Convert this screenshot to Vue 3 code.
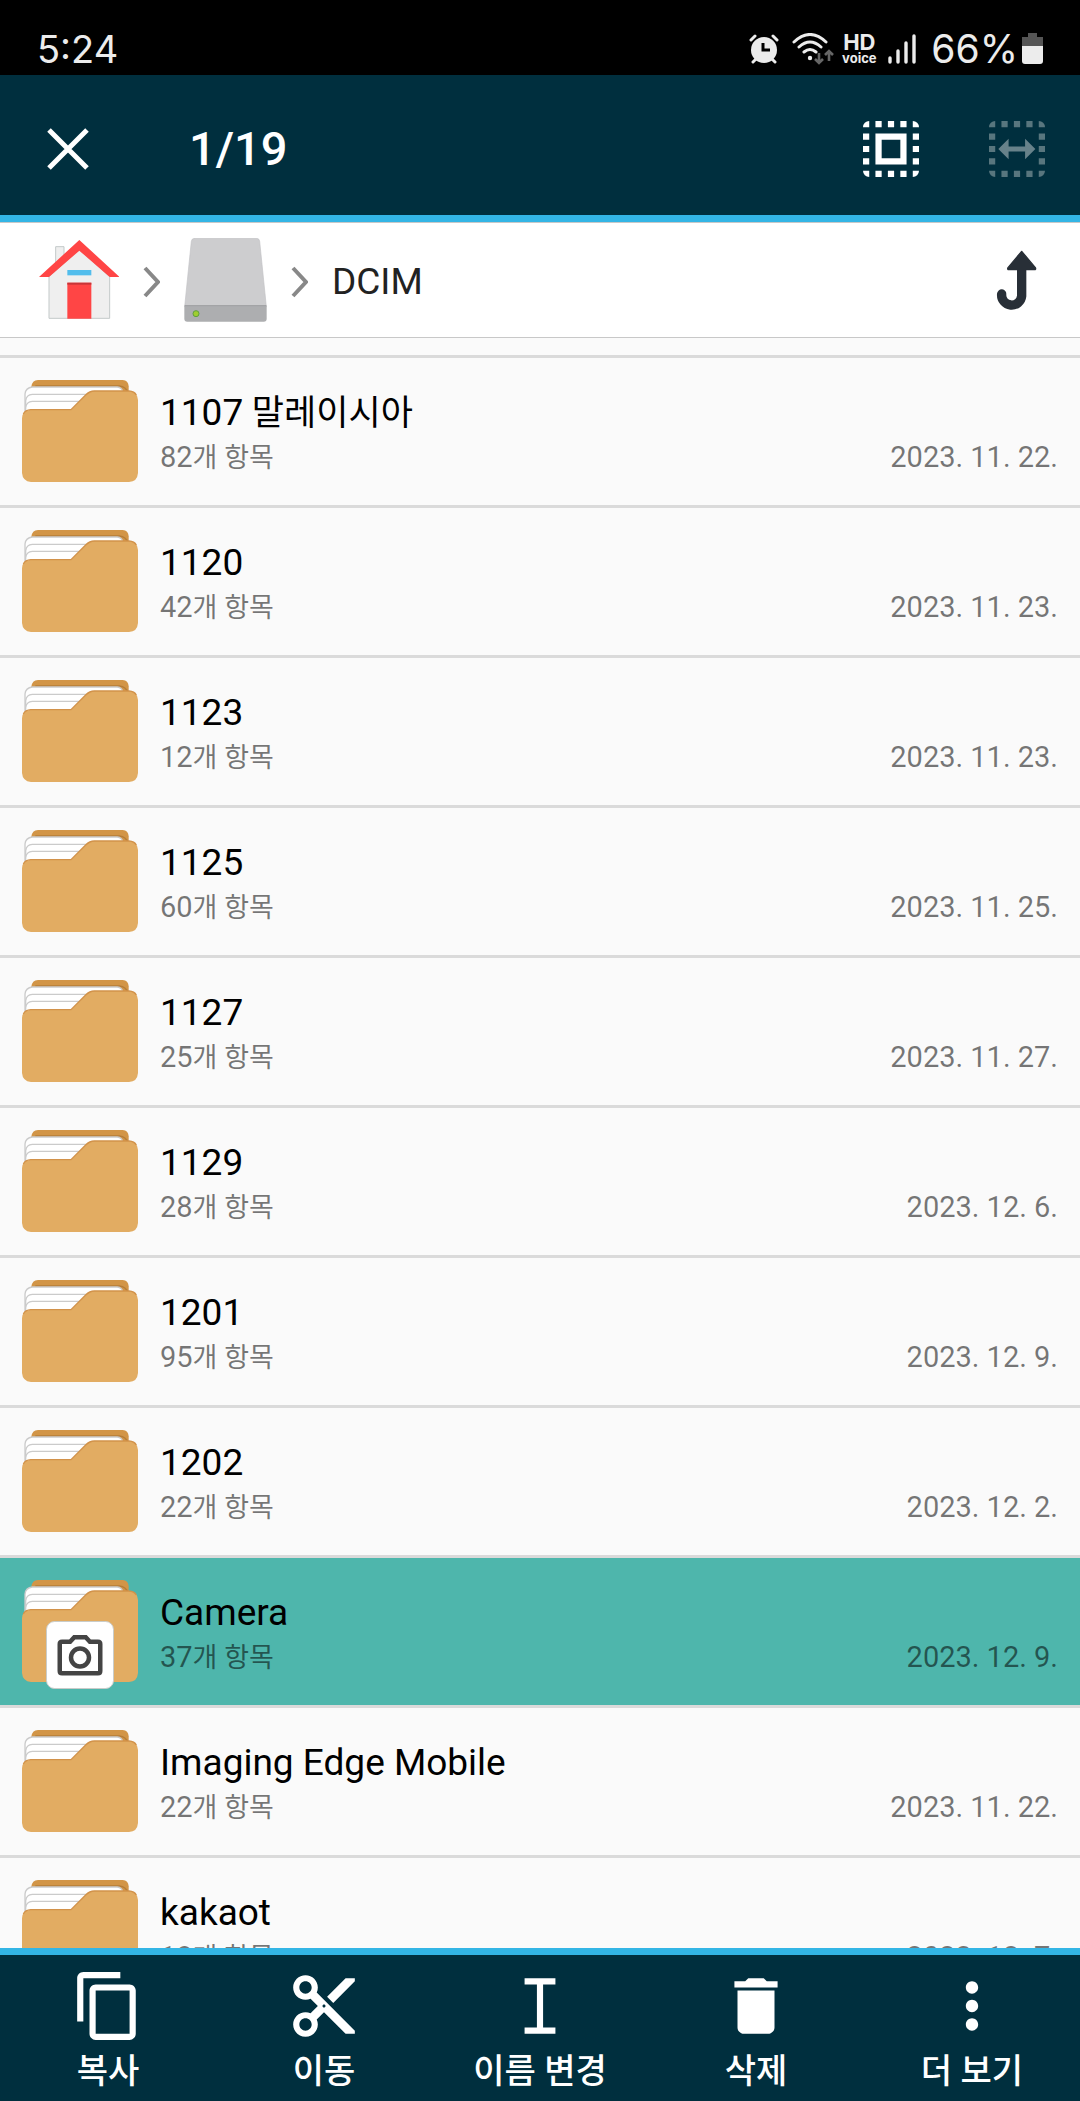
<script setup>
import { ref } from 'vue'

const folders = ref([
  { name: '1107', korean: '말레이시아', count: 82, date: '2023. 11. 22.' },
  { name: '1120', count: 42, date: '2023. 11. 23.' },
  { name: '1123', count: 12, date: '2023. 11. 23.' },
  { name: '1125', count: 60, date: '2023. 11. 25.' },
  { name: '1127', count: 25, date: '2023. 11. 27.' },
  { name: '1129', count: 28, date: '2023. 12. 6.' },
  { name: '1201', count: 95, date: '2023. 12. 9.' },
  { name: '1202', count: 22, date: '2023. 12. 2.' },
  { name: 'Camera', count: 37, date: '2023. 12. 9.', camera: true, selected: true },
  { name: 'Imaging Edge Mobile', count: 22, date: '2023. 11. 22.' },
  { name: 'kakaot', count: 18, date: '2023. 12. 7.' }
])

const actions = [
  {
    label: '복사',
    path: 'M16 1H4c-1.1 0-2 .9-2 2v14h2V3h12V1zm3 4H8c-1.1 0-2 .9-2 2v14c0 1.1.9 2 2 2h11c1.1 0 2-.9 2-2V7c0-1.1-.9-2-2-2zm0 16H8V7h11v14z'
  },
  {
    label: '이동',
    path: 'M9.64 7.64c.23-.5.36-1.05.36-1.64 0-2.21-1.79-4-4-4S2 3.79 2 6s1.79 4 4 4c.59 0 1.14-.13 1.64-.36L10 12l-2.36 2.36C7.14 14.13 6.59 14 6 14c-2.21 0-4 1.79-4 4s1.79 4 4 4 4-1.79 4-4c0-.59-.13-1.14-.36-1.64L12 14l7 7h3v-1L9.64 7.64zM6 8c-1.1 0-2-.89-2-2s.9-2 2-2 2 .89 2 2-.9 2-2 2zm0 12c-1.1 0-2-.89-2-2s.9-2 2-2 2 .89 2 2-.9 2-2 2zm6-7.5c-.28 0-.5-.22-.5-.5s.22-.5.5-.5.5.22.5.5-.22.5-.5.5zM19 3l-6 6 2 2 7-7V3z'
  },
  { label: '이름 변경', path: 'M7 3h10v2h-4v14h4v2H7v-2h4V5H7z' },
  {
    label: '삭제',
    path: 'M6 19c0 1.1.9 2 2 2h8c1.1 0 2-.9 2-2V7H6v12zM19 4h-3.5l-1-1h-5l-1 1H5v2h14V4z'
  },
  {
    label: '더 보기',
    path: 'M12 8c1.1 0 2-.9 2-2s-.9-2-2-2-2 .9-2 2 .9 2 2 2zm0 2c-1.1 0-2 .9-2 2s.9 2 2 2 2-.9 2-2-.9-2-2-2zm0 6c-1.1 0-2 .9-2 2s.9 2 2 2 2-.9 2-2-.9-2-2-2z'
  }
]

// Dashed selection frame shared by both toolbar icons (18 x 18 grid)
const frame =
  'M0 2a2 2 0 0 1 2-2v2zM4 0h2v2H4zM8 0h2v2H8zM12 0h2v2h-2zM16 0a2 2 0 0 1 2 2h-2zM0 4h2v2H0zM0 8h2v2H0zM0 12h2v2H0zM16 4h2v2h-2zM16 8h2v2h-2zM16 12h2v2h-2zM0 16h2v2a2 2 0 0 1-2-2zM4 16h2v2H4zM8 16h2v2H8zM12 16h2v2h-2zM16 16h2a2 2 0 0 1-2 2z'

function toggle(folder) {
  folder.selected = !folder.selected
}
</script>

<template>
  <div class="screen">
    <div class="status">
      <span class="clock">5:24</span>
      <div class="indicators">
        <svg width="30" height="30" viewBox="0 0 30 30">
          <g fill="none" stroke="#ececec" stroke-width="3" stroke-linecap="round">
            <path d="M2 6l4-4M28 6l-4-4M4 28l4-4M26 28l-4-4" />
          </g>
          <circle cx="15" cy="16" r="13" fill="#ececec" />
          <path d="M14 9v7h7" fill="none" stroke="#000" stroke-width="3" />
        </svg>
        <svg class="wifi" width="42" height="32" viewBox="0 0 42 32">
          <g fill="none" stroke="#ececec" stroke-width="3" stroke-linecap="round">
            <path d="M2 9Q18 -6 34 9M7 14Q18 4 29 14M12 19Q18 14 24 19" />
          </g>
          <circle cx="18" cy="25" r="2.2" fill="#ececec" />
          <path d="M27 20v10M23 26l4 4 4-4M37 28V18M33 22l4-4 4 4" fill="none" stroke="#666" stroke-width="2.6" />
        </svg>
        <span class="hd"><b>HD</b><b class="voice">voice</b></span>
        <svg class="signal" width="28" height="30" viewBox="0 0 28 30">
          <path d="M2 24v4M10 17v11M18 9v19M26 2v26" stroke="#ececec" stroke-width="3.4" stroke-linecap="round" />
        </svg>
        <span class="percent">66%</span>
        <svg width="21" height="31" viewBox="0 0 21 31">
          <path d="M6 0h9v4h6v10H0V4h6z" fill="#555" />
          <path d="M0 13h21v15a3 3 0 0 1-3 3H3a3 3 0 0 1-3-3z" fill="#ececec" />
        </svg>
      </div>
    </div>

    <header class="toolbar">
      <button class="tool" type="button" aria-label="닫기">
        <svg width="42" height="42" viewBox="0 0 42 42">
          <path d="M2 2l38 38M40 2L2 40" stroke="#fff" stroke-width="5" />
        </svg>
      </button>
      <h1>1/19</h1>
      <button class="tool" type="button" aria-label="모두 선택">
        <svg width="56" height="56" viewBox="0 0 18 18" fill="#fff">
          <path :d="frame" />
          <path d="M4 4h10v10H4zM6 6v6h6V6z" fill-rule="evenodd" />
        </svg>
      </button>
      <button class="tool" type="button" aria-label="범위 선택" disabled>
        <svg width="56" height="56" viewBox="0 0 18 18" fill="#67828a">
          <path :d="frame" opacity="0.85" />
          <path d="M3 9l3.3-3.3v2.5h5.3V5.7L14.9 9l-3.3 3.3V9.8H6.3v2.5z" />
        </svg>
      </button>
    </header>

    <nav class="crumbs">
      <a href="#" aria-label="홈">
        <svg width="80" height="80" viewBox="0 0 240 240">
          <path d="M50 20h25v60H50z" fill="#efefef" stroke="#c3c9c9" stroke-width="3" />
          <path d="M30 110L121 28l91 82v125H30z" fill="#efefef" stroke="#c3c9c9" stroke-width="3" />
          <path d="M0 111L121 0l121 111h-30L121 32 30 111z" fill="#ff4545" />
          <path d="M85 90h72v16H85z" fill="#52bdec" />
          <path d="M85 128h72v108H85z" fill="#ff4545" />
          <path d="M85 128h72v6H85z" fill="#c83538" />
        </svg>
      </a>
      <svg class="chevron" width="17" height="32" viewBox="0 0 17 32">
        <path d="M2 2l13 14L2 30" />
      </svg>
      <a href="#" aria-label="내장 저장공간">
        <svg width="83" height="84" viewBox="0 0 249 252">
          <path d="M22 10Q23 1 33 1h184q9 0 10 9l20 196H2z" fill="#cdcdcf" stroke="#c3c3c5" stroke-width="2" />
          <path d="M1 202h247v40q0 9-9 9H10q-9 0-9-9z" fill="#adaeb0" />
          <path d="M3 203h243" stroke="#a0a1a3" stroke-width="3" />
          <circle cx="36" cy="227" r="9" fill="#a0ce2f" stroke="#5fa03f" stroke-width="3" />
        </svg>
      </a>
      <svg class="chevron" width="17" height="32" viewBox="0 0 17 32">
        <path d="M2 2l13 14L2 30" />
      </svg>
      <a class="current" href="#">DCIM</a>
      <button type="button" aria-label="상위 폴더">
        <svg width="42" height="60" viewBox="0 0 126 180">
          <path d="M17 132a29 29 0 0 0 60 6V50" fill="none" stroke="#282f37" stroke-width="28" stroke-linecap="round" />
          <path d="M77 4l41 49q3 6-3 6H39q-6 0-3-6z" fill="#282f37" stroke="#282f37" stroke-width="4" stroke-linejoin="round" />
        </svg>
      </button>
    </nav>

    <main class="list">
      <ul>
        <li v-for="folder in folders" :key="folder.name">
          <button
            class="row"
            :class="{ selected: folder.selected }"
            type="button"
            :aria-pressed="!!folder.selected"
            @click="toggle(folder)"
          >
            <span class="thumb">
              <svg width="116" height="102" viewBox="0 0 348 306">
                <path d="M28 60V20Q30 1 48 0h254q17 1 18 19v60H28z" fill="#d29547" />
                <path d="M40 18h252q20 2 26 20" fill="none" stroke="#b57d38" stroke-width="4" />
                <g fill="#fff" stroke="#cbcbcb" stroke-width="4">
                  <path d="M9 110V42q2-19 22-21h255q14 2 16 14v70z" />
                  <path d="M11 110V62q2-18 20-19h200v60z" />
                  <path d="M11 110V83q2-18 20-19h170v45z" />
                </g>
                <path
                  d="M0 115Q1 90 26 89h121l44-44q12-12 26-12h104q26 2 27 27v219q-2 26-27 27H27Q2 304 0 279z"
                  fill="#e2ac62"
                />
                <path
                  d="M4 102Q10 90 26 89h121l44-44q12-12 26-12h104q16 1 22 12"
                  fill="none"
                  stroke="#d2924a"
                  stroke-width="4"
                />
              </svg>
              <svg v-if="folder.camera" class="badge" width="68" height="68" viewBox="0 0 68 68">
                <rect x="0.5" y="0.5" width="67" height="67" rx="8" fill="#fff" stroke="#c9ccc9" />
                <g transform="translate(7 9.5) scale(2.25)" fill="none" stroke="#444" stroke-width="2">
                  <path d="M4 5h3.6l1.85-2h5.1l1.85 2H20q1 0 1 1v12q0 1-1 1H4q-1 0-1-1V6q0-1 1-1z" />
                  <circle cx="12" cy="12" r="4" />
                </g>
              </svg>
            </span>
            <span class="info">
              <span class="name">{{ folder.name }}<span v-if="folder.korean" class="ko">&nbsp;{{ folder.korean }}</span></span>
              <span class="meta">
                <span>{{ folder.count }}<span class="ko">개 항목</span></span>
                <span>{{ folder.date }}</span>
              </span>
            </span>
          </button>
        </li>
      </ul>
    </main>

    <footer class="actions">
      <button v-for="action in actions" :key="action.label" type="button">
        <svg width="74" height="74" viewBox="0 0 24 24" fill="#fff"><path :d="action.path" /></svg>
        <span>{{ action.label }}</span>
      </button>
    </footer>
  </div>
</template>

<style>
body {
  margin: 0;
  background: #fafafa;
}
</style>

<style scoped>
.screen {
  display: flex;
  flex-direction: column;
  height: 100vh;
  background: #fafafa;
  font-family: Roboto, 'Noto Sans CJK KR', sans-serif;
  color: #000;
}

svg {
  display: block;
  flex: none;
}

button {
  padding: 0;
  border: 0;
  background: none;
  color: inherit;
  font: inherit;
}

.status {
  flex: none;
  display: flex;
  align-items: center;
  justify-content: space-between;
  box-sizing: border-box;
  height: 75px;
  padding: 22px 37px 0;
  background: #000;
  color: #ececec;
  font-family: Inter, sans-serif;
  font-size: 39px;
  line-height: 50px;
}

.clock {
  font-size: 38px;
}

.indicators {
  display: flex;
  align-items: center;
}

.wifi {
  margin-left: 13px;
}

.hd {
  display: flex;
  flex-direction: column;
  align-items: center;
  width: 34px;
  margin-left: 8px;
  font-size: 22px;
  line-height: 19px;
}

.voice {
  font-size: 13px;
  line-height: 13px;
}

.signal {
  margin-left: 12px;
}

.percent {
  margin: 0 4px 0 15px;
}

.toolbar {
  flex: none;
  display: flex;
  align-items: center;
  box-sizing: border-box;
  height: 147px;
  padding: 7px 35px 0 47px;
  border-bottom: 7px solid #33b5e5;
  background: #002f3e;
  color: #fff;
}

h1 {
  flex: 1;
  margin: 0 0 0 100px;
  font-size: 47px;
  font-weight: 500;
  line-height: 56px;
}

.tool + .tool {
  margin-left: 70px;
}

.crumbs {
  flex: none;
  display: flex;
  align-items: center;
  gap: 24px;
  box-sizing: border-box;
  height: 116px;
  padding: 0 42px 0 39px;
  border: solid #c8c8c8;
  border-width: 1px 0;
  background: #fff;
}

.crumbs a {
  color: #222;
  text-decoration: none;
}

.current {
  flex: 1;
  font-size: 37px;
  line-height: 48px;
}

.chevron {
  fill: none;
  stroke: #888;
  stroke-width: 4;
}

.chevron,
.current {
  margin-top: 3px;
}

.list {
  flex: 1;
  min-height: 0;
  overflow: hidden;
}

ul {
  margin: 17px 0 0;
  padding: 0;
  list-style: none;
}

li {
  border-top: 3px solid #dadada;
}

.row {
  display: flex;
  align-items: center;
  gap: 22px;
  width: 100%;
  height: 147px;
  padding: 0 22px;
  text-align: left;
}

.selected {
  background: #4eb6ac;
}

.thumb {
  position: relative;
  height: 103px;
}

.badge {
  position: absolute;
  left: 24px;
  top: 41px;
}

.info {
  flex: 1;
  padding-top: 2px;
}

.name {
  display: block;
  font-size: 37px;
  line-height: 48px;
}

.name .ko {
  font-size: 35px;
  line-height: 35px;
}

.meta {
  display: flex;
  justify-content: space-between;
  color: rgba(0, 0, 0, 0.54);
  font-size: 29px;
  line-height: 40px;
}

.meta .ko {
  font-size: 27px;
  line-height: 27px;
}

.actions {
  flex: none;
  display: flex;
  box-sizing: border-box;
  height: 153px;
  padding-top: 14px;
  border-top: 7px solid #33b5e5;
  background: #002f3e;
  color: #fff;
}

.actions button {
  flex: 1;
  display: flex;
  flex-direction: column;
  align-items: center;
  font-size: 34px;
  font-weight: 500;
  line-height: 56px;
}
</style>
